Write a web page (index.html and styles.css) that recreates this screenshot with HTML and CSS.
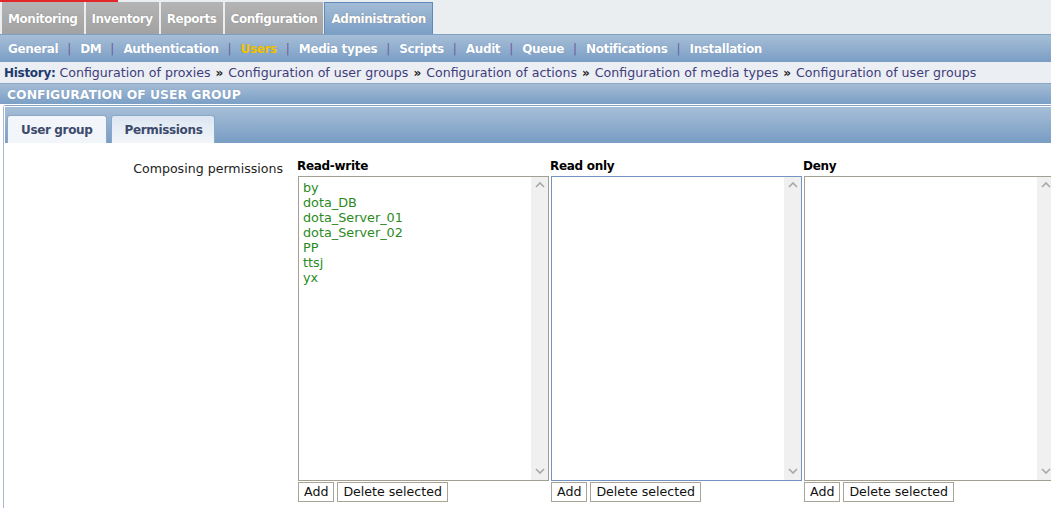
FILE: index.html
```html
<!DOCTYPE html>
<html>
<head>
<meta charset="utf-8">
<link rel="stylesheet" href="styles.css">
</head>
<body>
<div class="topline"><div class="redbar"></div></div>
<div class="mainmenu">
  <a class="mtab">Monitoring</a>
  <a class="mtab">Inventory</a>
  <a class="mtab">Reports</a>
  <a class="mtab">Configuration</a>
  <a class="mtab active">Administration</a>
</div>
<div class="submenu">
  <a class="sitem">General</a><span class="sep">|</span>
  <a class="sitem">DM</a><span class="sep">|</span>
  <a class="sitem">Authentication</a><span class="sep">|</span>
  <a class="sitem sel">Users</a><span class="sep">|</span>
  <a class="sitem">Media types</a><span class="sep">|</span>
  <a class="sitem">Scripts</a><span class="sep">|</span>
  <a class="sitem">Audit</a><span class="sep">|</span>
  <a class="sitem">Queue</a><span class="sep">|</span>
  <a class="sitem">Notifications</a><span class="sep">|</span>
  <a class="sitem">Installation</a>
</div>
<div class="history">
  <b class="hlabel">History:</b>
  <a class="hlink">Configuration of proxies</a><span class="raquo">»</span>
  <a class="hlink">Configuration of user groups</a><span class="raquo">»</span>
  <a class="hlink">Configuration of actions</a><span class="raquo">»</span>
  <a class="hlink">Configuration of media types</a><span class="raquo">»</span>
  <a class="hlink">Configuration of user groups</a>
</div>
<div class="header">CONFIGURATION OF USER GROUP</div>
<div class="panel">
  <div class="tabs">
    <a class="tab">User group</a>
    <a class="tab current">Permissions</a>
  </div>
  <div class="form">
    <div class="label">Composing permissions</div>
    <div class="col">
      <div class="colhead">Read-write</div>
      <div class="listbox">
        <div class="items">
          <div>by</div>
          <div>dota_DB</div>
          <div>dota_Server_01</div>
          <div>dota_Server_02</div>
          <div>PP</div>
          <div>ttsj</div>
          <div>yx</div>
        </div>
        <div class="sbar">
          <svg class="arr" width="10" height="6" viewBox="0 0 10 6"><polyline points="1,5 5,1 9,5" fill="none" stroke="#a6a6a6" stroke-width="1.6"/></svg>
          <svg class="arr" width="10" height="6" viewBox="0 0 10 6"><polyline points="1,1 5,5 9,1" fill="none" stroke="#a6a6a6" stroke-width="1.6"/></svg>
        </div>
      </div>
      <div class="btns"><button class="btn">Add</button><button class="btn">Delete selected</button></div>
    </div>
    <div class="col">
      <div class="colhead">Read only</div>
      <div class="listbox focus">
        <div class="items"></div>
        <div class="sbar">
          <svg class="arr" width="10" height="6" viewBox="0 0 10 6"><polyline points="1,5 5,1 9,5" fill="none" stroke="#a6a6a6" stroke-width="1.6"/></svg>
          <svg class="arr" width="10" height="6" viewBox="0 0 10 6"><polyline points="1,1 5,5 9,1" fill="none" stroke="#a6a6a6" stroke-width="1.6"/></svg>
        </div>
      </div>
      <div class="btns"><button class="btn">Add</button><button class="btn">Delete selected</button></div>
    </div>
    <div class="col">
      <div class="colhead">Deny</div>
      <div class="listbox">
        <div class="items"></div>
        <div class="sbar">
          <svg class="arr" width="10" height="6" viewBox="0 0 10 6"><polyline points="1,5 5,1 9,5" fill="none" stroke="#a6a6a6" stroke-width="1.6"/></svg>
          <svg class="arr" width="10" height="6" viewBox="0 0 10 6"><polyline points="1,1 5,5 9,1" fill="none" stroke="#a6a6a6" stroke-width="1.6"/></svg>
        </div>
      </div>
      <div class="btns"><button class="btn">Add</button><button class="btn">Delete selected</button></div>
    </div>
  </div>
</div>
</body>
</html>
```
FILE: styles.css
```css
html, body {
  margin: 0;
  padding: 0;
  background: #ffffff;
  overflow: hidden;
}
body {
  font-family: "DejaVu Sans", Verdana, sans-serif;
  font-size: 12.6px;
  color: #000;
  width: 1051px;
}
a { text-decoration: none; cursor: pointer; }

.topline {
  height: 2px;
  background: #ebeef1;
}
.redbar {
  width: 118px;
  height: 2px;
  background: #e3262a;
}

.mainmenu {
  display: flex;
  gap: 2px;
  height: 33px;
  padding-left: 2px;
  background: #ebeef1;
  border-bottom: 1px solid #7f9fc0;
  box-sizing: border-box;
}
.mtab {
  display: flex;
  align-items: center;
  padding: 1px 6px 0;
  font-weight: bold;
  font-size: 12px;
  letter-spacing: -0.45px;
  color: #ffffff;
  text-shadow: 0 0 1px #777;
  background: linear-gradient(#b4b4b4, #a2a2a2);
}
.mtab.active {
  background: linear-gradient(#a3bcd6, #7b9fc5);
  border: 1px solid #5d8abb;
  border-bottom: none;
  margin-left: -1px;
}

.submenu {
  display: flex;
  align-items: center;
  height: 27px;
  padding-left: 8px;
  background: linear-gradient(#a6bed7, #7b9ec5);
}
.sitem {
  font-weight: bold;
  font-size: 12px;
  letter-spacing: -0.38px;
  color: #ffffff;
  text-shadow: 0 0 1px #6d8ab0;
}
.sitem.sel { color: #f5c400; }
.sep {
  color: #6b5f99;
  padding: 0 9px;
  font-size: 12px;
}

.history {
  height: 21px;
  padding-left: 4px;
  display: flex;
  align-items: center;
  background: #ebeef2;
  border-bottom: 1px solid #8ea6c3;
  font-size: 12.6px;
  white-space: nowrap;
}
.hlabel { color: #213a70; margin-right: 4px; font-size: 12px; letter-spacing: -0.3px; }
.hlink { color: #3f3d7d; }
.raquo { color: #222; font-weight: bold; padding: 0 5px; font-size: 12px; }

.header {
  height: 20px;
  padding-left: 7px;
  display: flex;
  align-items: center;
  background: linear-gradient(#a4bcd5, #7b9fc6);
  color: #fff;
  font-weight: bold;
  font-size: 12.4px;
  text-shadow: 0 0 1px #6d8ab0;
}

.panel {
  margin-top: 1px;
  margin-left: 3px;
  border-top: 1px solid #8aa3c1;
  border-left: 1px solid #a9bace;
  border-top-left-radius: 3px;
}
.tabs {
  display: flex;
  gap: 4px;
  height: 37px;
  padding: 8px 0 0 2px;
  box-sizing: border-box;
  background: linear-gradient(#a6bed7, #799dc4);
  border-left: 1px solid #fff;
  border-top: 1px solid #fff;
  align-items: flex-end;
}
.tab {
  display: flex;
  align-items: center;
  height: 28px;
  padding: 0 13px 0 13px;
  box-sizing: border-box;
  font-weight: bold;
  font-size: 12px;
  letter-spacing: -0.35px;
  color: #3c4a6c;
  background: #f2f5f9;
  border: 1px solid #8aa8c8;
  border-bottom: none;
  border-radius: 3px 3px 0 0;
}
.tab.current {
  background: linear-gradient(#dce6f1, #f3f6fa);
  padding-right: 12px;
}

.form {
  display: flex;
  padding-top: 15px;
  margin-left: -1px;
  height: 370px;
}
.label {
  width: 295px;
  flex-shrink: 0;
  text-align: right;
  padding-top: 3px;
  padding-right: 15px;
  box-sizing: border-box;
  line-height: 15px;
  color: #222;
}
.col {
  width: 253px;
  flex-shrink: 0;
}
.colhead {
  font-weight: bold;
  font-size: 12px;
  letter-spacing: -0.3px;
  height: 16px;
  line-height: 16px;
  margin-left: -1px;
}
.listbox {
  display: flex;
  width: 251px;
  height: 305px;
  box-sizing: border-box;
  border: 1px solid #a39f92;
  margin-top: 2px;
  background: #fff;
}
.listbox.focus { border-color: #7293c4; }
.items {
  flex: 1;
  padding: 3px 0 0 4px;
  color: #2b8a1e;
  font-size: 12.8px;
  line-height: 15px;
}
.sbar {
  width: 17px;
  background: #f0f0f0;
  display: flex;
  flex-direction: column;
  justify-content: space-between;
  align-items: center;
  padding: 5px 0 6px;
  box-sizing: border-box;
}
.arr { display: block; }

.btns {
  display: flex;
  gap: 3px;
  margin-top: 1px;
}
.btn {
  font-family: "DejaVu Sans", Verdana, sans-serif;
  font-size: 12.6px;
  height: 20px;
  padding: 0 5px;
  background: #fff;
  border: 1px solid #a8a596;
  color: #111;
  margin: 0;
  line-height: 16px;
}
```
